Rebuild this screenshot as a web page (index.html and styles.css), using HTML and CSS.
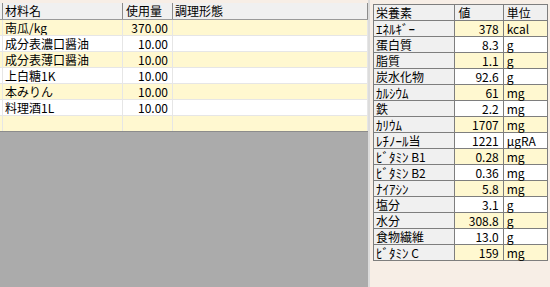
FILE: index.html
```html
<!DOCTYPE html>
<html lang="ja">
<head>
<meta charset="utf-8">
<link rel="stylesheet" href="styles.css">
</head>
<body>
<div class="app">
  <div class="left">
    <div class="grid">
      <div class="row head"><div class="c0"></div><div class="c1">材料名</div><div class="c2 hl">使用量</div><div class="c3">調理形態</div></div>
      <div class="row y"><div class="c0"></div><div class="c1">南瓜/kg</div><div class="c2">370.00</div><div class="c3"></div></div>
      <div class="row"><div class="c0"></div><div class="c1">成分表濃口醤油</div><div class="c2">10.00</div><div class="c3"></div></div>
      <div class="row y"><div class="c0"></div><div class="c1">成分表薄口醤油</div><div class="c2">10.00</div><div class="c3"></div></div>
      <div class="row"><div class="c0"></div><div class="c1">上白糖1K</div><div class="c2">10.00</div><div class="c3"></div></div>
      <div class="row y"><div class="c0"></div><div class="c1">本みりん</div><div class="c2">10.00</div><div class="c3"></div></div>
      <div class="row"><div class="c0"></div><div class="c1">料理酒1L</div><div class="c2">10.00</div><div class="c3"></div></div>
      <div class="row y last"><div class="c0"></div><div class="c1"></div><div class="c2"></div><div class="c3"></div></div>
    </div>
  </div>
  <div class="sep"></div>
  <div class="right">
    <table class="nut">
      <tr class="nh"><td class="n">栄養素</td><td class="vh">値</td><td class="uh">単位</td></tr>
      <tr class="y"><td class="n"><span class="hw">ｴﾈﾙｷﾞｰ</span></td><td class="v">378</td><td class="u">kcal</td></tr>
      <tr><td class="n">蛋白質</td><td class="v">8.3</td><td class="u">g</td></tr>
      <tr class="y"><td class="n">脂質</td><td class="v">1.1</td><td class="u">g</td></tr>
      <tr><td class="n">炭水化物</td><td class="v">92.6</td><td class="u">g</td></tr>
      <tr class="y"><td class="n"><span class="hw">ｶﾙｼｳﾑ</span></td><td class="v">61</td><td class="u">mg</td></tr>
      <tr><td class="n">鉄</td><td class="v">2.2</td><td class="u">mg</td></tr>
      <tr class="y"><td class="n"><span class="hw">ｶﾘｳﾑ</span></td><td class="v">1707</td><td class="u">mg</td></tr>
      <tr><td class="n"><span class="hw">ﾚﾁﾉｰﾙ</span>当</td><td class="v">1221</td><td class="u">μgRA</td></tr>
      <tr class="y"><td class="n"><span class="hw">ﾋﾞﾀﾐﾝ</span> B1</td><td class="v">0.28</td><td class="u">mg</td></tr>
      <tr><td class="n"><span class="hw">ﾋﾞﾀﾐﾝ</span> B2</td><td class="v">0.36</td><td class="u">mg</td></tr>
      <tr class="y"><td class="n"><span class="hw">ﾅｲｱｼﾝ</span></td><td class="v">5.8</td><td class="u">mg</td></tr>
      <tr><td class="n">塩分</td><td class="v">3.1</td><td class="u">g</td></tr>
      <tr class="y"><td class="n">水分</td><td class="v">308.8</td><td class="u">g</td></tr>
      <tr><td class="n">食物繊維</td><td class="v">13.0</td><td class="u">g</td></tr>
      <tr class="y"><td class="n"><span class="hw">ﾋﾞﾀﾐﾝ</span> C</td><td class="v">159</td><td class="u">mg</td></tr>
    </table>
  </div>
</div>
</body>
</html>
```

FILE: styles.css
```css
html, body {
  margin: 0;
  padding: 0;
}
body {
  width: 550px;
  height: 287px;
  overflow: hidden;
  background: #f7eee6;
  font-family: "Noto Sans CJK JP", "Noto Sans", sans-serif;
  font-size: 12px;
  color: #000;
}
.app {
  display: flex;
  height: 287px;
}
.left {
  width: 368px;
  padding-top: 3px;
  display: flex;
  flex-direction: column;
}
.grid {
  background: #ababab;
  flex: 1;
}
.row {
  display: flex;
  height: 15px;
  border-bottom: 1px solid #e6e6e6;
  background: #ffffff;
  line-height: 15px;
}
.row.y {
  background: #fff8d0;
}
.row.last {
  border-bottom: 1px solid #8c8c8c;
}
.row.head {
  height: 16px;
  line-height: 16px;
  background: #f0f0f0;
  border-bottom: 1px solid #9a9a9a;
}
.row > div {
  border-right: 1px solid #e6e6e6;
  white-space: nowrap;
  overflow: hidden;
}
.row.head > div {
  border-right: 1px solid #8c8c8c;
}
.c0 { width: 2px; }
.c1 { width: 117px; padding-left: 2px; }
.c2 { width: 45px; padding-right: 4px; text-align: right; }
.row.head .c2 { text-align: left; padding-left: 3px; width: 46px; padding-right: 0; }
.c3 { width: 192px; padding-left: 2px; }
.sep {
  width: 2px;
  background: #dcdcdc;
}
.right {
  flex: 1;
  padding: 4px 0 0 3px;
}
.nut {
  border-collapse: collapse;
  table-layout: fixed;
  width: 175px;
}
.nut td {
  border: 1px solid #7e7e7e;
  height: 15px;
  padding: 0;
  line-height: 15px;
  white-space: nowrap;
}
.nut tr {
  background: #ffffff;
}
.nut tr.y td.v, .nut tr.y td.u {
  background: #fff8d0;
}
.nut td.n {
  width: 78px;
  padding-left: 2px;
  background: #f0f0f0;
}
.hw {
  font-size: 13px;
  line-height: 12px;
}
.nut td.vh, .nut td.uh {
  background: #f0f0f0;
  padding-left: 3px;
}
.nut td.vh { width: 44px; }
.nut td.uh { width: 40px; }
.nut td.v {
  text-align: right;
  padding-right: 4px;
}
.nut td.u {
  padding-left: 3px;
}
```
